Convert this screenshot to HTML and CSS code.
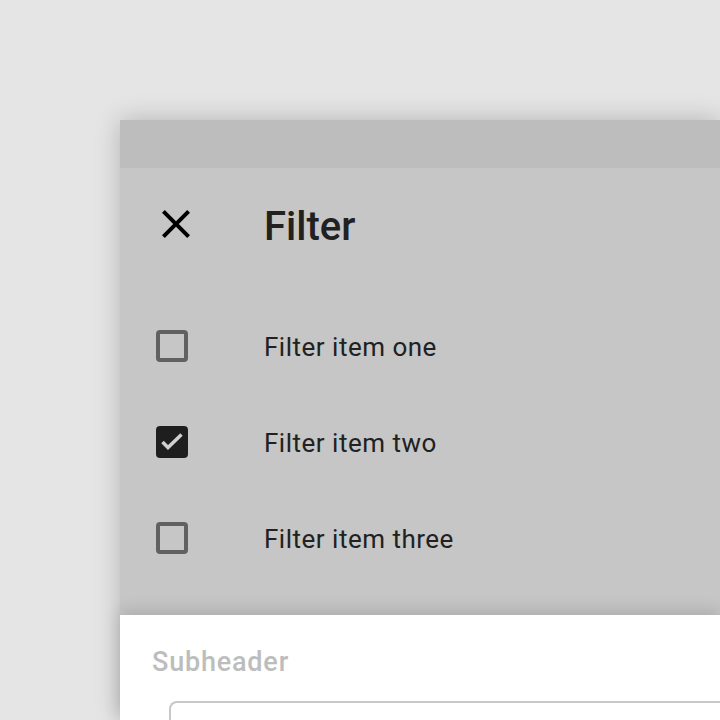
FILE: index.html
```html
<!doctype html>
<html lang="en">
<head>
  <meta charset="UTF-8">
  <title>Filter</title>
  <link rel="stylesheet" href="styles.css">
</head>
<body>
  <div class="device">
    <div class="status-bar"></div>
    <div class="backdrop">
      <div class="toolbar">
        <button type="button" class="icon-btn" aria-label="Close">
          <svg width="48" height="48" viewBox="0 0 24 24"><path d="M19 6.41L17.59 5 12 10.59 6.41 5 5 6.41 10.59 12 5 17.59 6.41 19 12 13.41 17.59 19 19 17.59 13.41 12z"/></svg>
        </button>
        <h1 class="title">Filter</h1>
      </div>
      <ul class="filter-list">
        <li class="filter-item">
          <span class="check"></span><span class="label">Filter item one</span>
        </li>
        <li class="filter-item">
          <span class="check checked">
            <svg width="32" height="32" viewBox="0 0 32 32"><polyline points="6.5,16 12,21.5 25.5,8.5"/></svg>
          </span><span class="label">Filter item two</span>
        </li>
        <li class="filter-item">
          <span class="check"></span><span class="label">Filter item three</span>
        </li>
      </ul>
    </div>
    <div class="sheet">
      <h2 class="subheader">Subheader</h2>
      <div class="text-field"></div>
    </div>
  </div>
</body>
</html>
```

FILE: styles.css
```css
html, body {
  height: 100%;
}

body {
  margin: 0;
  padding: 120px 0 0 120px;
  box-sizing: border-box;
  overflow: hidden;
  background: #e5e5e5;
  font-family: Roboto, "Noto Sans", sans-serif;
  color: #212121;
}

/* fills the rest of the window; its right and bottom edges sit off screen */
.device {
  height: 100%;
  box-shadow: 0 0 24px rgba(0, 0, 0, 0.22);
}

.status-bar {
  height: 48px;
  background: #bdbdbd;
}

.backdrop {
  background: #c6c6c6;
}

.toolbar {
  display: flex;
  align-items: center;
  height: 48px;
  padding: 32px 0;
}

.icon-btn {
  width: 48px;
  height: 48px;
  margin-left: 32px;
  padding: 0;
  border: 0;
  background: none;
}

.icon-btn svg {
  display: block;
  fill: #000;
}

.title {
  margin: 0 0 0 64px;
  font-size: 40px;
  font-weight: 500;
  line-height: 48px;
  padding-top: 6px;
}

.filter-list {
  list-style: none;
  margin: 0;
  padding: 18px 0 29px;
}

.filter-item {
  display: flex;
  align-items: center;
  height: 96px;
}

.check {
  box-sizing: border-box;
  width: 32px;
  height: 32px;
  margin-left: 36px;
  border: 4px solid #616161;
  border-radius: 4px;
}

.check.checked {
  border: 0;
  background: #1e1e1e;
}

.check svg {
  display: block;
  fill: none;
  stroke: #d0d0d0;
  stroke-width: 3.5;
}

.label {
  margin-left: 76px;
  font-size: 26px;
  letter-spacing: 0.5px;
  line-height: 32px;
  padding-top: 1px;
}

/* front sheet casts its shadow up onto the backdrop */
.sheet {
  position: relative;
  height: 105px;
  overflow: hidden;
  background: #fff;
  box-shadow: 0 -4px 16px rgba(0, 0, 0, 0.14);
}

.subheader {
  margin: 0;
  padding: 31px 0 0 32px;
  font-size: 27px;
  font-weight: 500;
  letter-spacing: 0.8px;
  line-height: 32px;
  color: #bdbdbd;
}

.text-field {
  height: 80px;
  margin: 23px 0 0 49px;
  border: 2px solid #c8c8c8;
  border-right: 0;
  border-radius: 8px 0 0 8px;
}
```
